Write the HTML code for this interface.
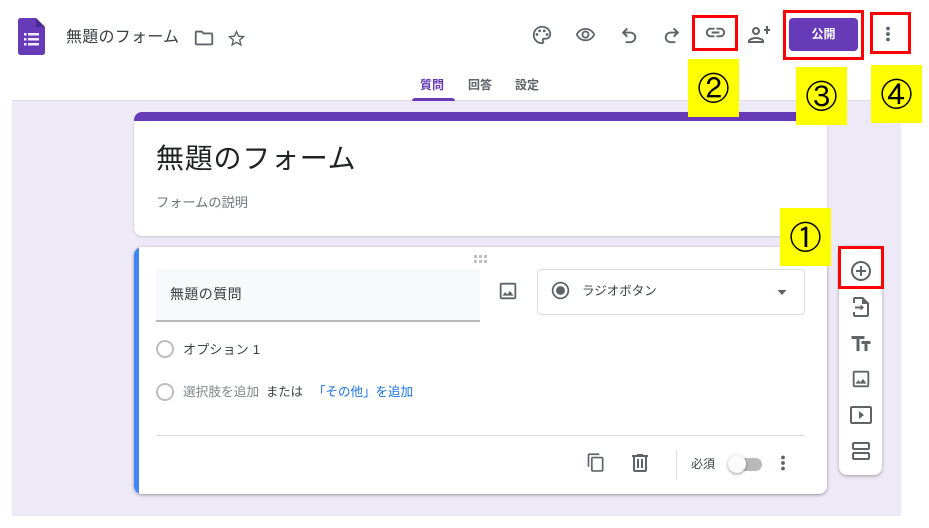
<!DOCTYPE html>
<html lang="ja"><head><meta charset="utf-8"><style>
html,body{margin:0;padding:0;background:#fff}
body{width:929px;height:528px;position:relative;overflow:hidden;font-family:"Liberation Sans","Noto Sans CJK JP",sans-serif;color:#202124}
.a{position:absolute}
.t{position:absolute;white-space:nowrap;line-height:1}
svg.i{position:absolute;fill:#5f6368}
.y{position:absolute;background:#ff0;width:51px;height:58px;font-family:"IPAGothic","Noto Sans CJK JP",sans-serif;font-size:32px;line-height:58px;text-align:center;color:#000}
.r{position:absolute;border:3px solid #f00;box-sizing:border-box}
.radio{position:absolute;width:18px;height:18px;border:2px solid #bdbdbd;border-radius:50%;box-sizing:border-box}
</style></head><body>
<div class="a" style="left:12px;top:100px;width:889px;height:416px;background:#ede9f7;border-top:1px solid #dfdce8;box-sizing:border-box"></div>

<svg class="a" style="left:18px;top:18px" width="28" height="37" viewBox="0 0 28 37"><path d="M2.500 0H18l9 9v25.500a2.500 2.500 0 0 1-2.500 2.500h-22A2.500 2.500 0 0 1 0 34.500v-32A2.500 2.500 0 0 1 2.500 0z" fill="#673ab7"/><path d="M18 0l9 9h-9z" fill="#4a2a8c"/><g fill="#f1ebfa"><rect x="6" y="15" width="2.500" height="2.500"/><rect x="10" y="15" width="11" height="2.500"/><rect x="6" y="20" width="2.500" height="2.500"/><rect x="10" y="20" width="11" height="2.500"/><rect x="6" y="25" width="2.500" height="2.500"/><rect x="10" y="25" width="11" height="2.500"/></g></svg>
<div class="t" style="left:66px;top:30px;font-size:16px;color:#3c4043;letter-spacing:.25px">無題のフォーム</div>
<svg class="i" style="left:193px;top:27px" width="22" height="22" viewBox="0 0 24 24"><path d="M20 6h-8l-2-2H4c-1.100 0-2 .9-2 2v12c0 1.100.9 2 2 2h16c1.100 0 2-.9 2-2V8c0-1.100-.9-2-2-2zm0 12H4V6h5.170l2 2H20v10z"/></svg>
<svg class="i" style="left:226px;top:28px" width="21" height="21" viewBox="0 0 24 24"><path d="M22 9.240l-7.190-.62L12 2 9.190 8.630 2 9.240l5.460 4.730L5.820 21 12 17.270 18.180 21l-1.630-7.030L22 9.240zM12 15.400l-3.760 2.270 1-4.280-3.320-2.880 4.380-.38L12 6.100l1.710 4.040 4.380.38-3.320 2.880 1 4.280L12 15.400z"/></svg>

<svg class="i" style="left:531px;top:24px" width="22" height="22" viewBox="0 0 24 24"><path d="M12 2C6.490 2 2 6.490 2 12s4.490 10 10 10c1.380 0 2.500-1.120 2.500-2.500 0-.61-.23-1.200-.64-1.670-.08-.1-.13-.21-.13-.33 0-.28.22-.5.500-.5H16c3.310 0 6-2.690 6-6 0-4.960-4.490-9-10-9zm4 13h-1.770c-1.380 0-2.500 1.120-2.500 2.500 0 .61.220 1.190.63 1.650.1.120.14.220.14.350 0 .28-.22.500-.5.500-4.410 0-8-3.590-8-8s3.590-8 8-8 8 3.140 8 7c0 2.210-1.790 4-4 4z"/><circle cx="6.500" cy="11.500" r="1.500"/><circle cx="9.500" cy="7.500" r="1.500"/><circle cx="14.500" cy="7.500" r="1.500"/><circle cx="17.500" cy="11.500" r="1.500"/></svg>
<svg class="i" style="left:575px;top:23px" width="21" height="24" viewBox="0 0 24 24"><path d="M12 6c3.790 0 7.170 2.130 8.820 5.500C19.170 14.870 15.790 17 12 17s-7.170-2.130-8.820-5.500C4.830 8.130 8.210 6 12 6m0-2C7 4 2.730 7.110 1 11.500 2.730 15.890 7 19 12 19s9.270-3.110 11-7.500C21.270 7.110 17 4 12 4zm0 5c1.380 0 2.500 1.120 2.500 2.500S13.380 14 12 14s-2.500-1.120-2.500-2.500S10.620 9 12 9m0-2c-2.480 0-4.500 2.020-4.500 4.500S9.520 16 12 16s4.500-2.020 4.500-4.500S14.480 7 12 7z"/></svg>
<svg class="i" style="left:618px;top:23px" width="23" height="23" viewBox="0 0 24 24"><path d="M13 9H7.830l2.590-2.590L9 5 4 10l5 5 1.410-1.410L7.830 11H13c2.210 0 4 1.790 4 4s-1.790 4-4 4H8v2h5c3.310 0 6-2.690 6-6s-2.690-6-6-6z"/></svg>
<svg class="i" style="left:660px;top:23px" width="23" height="23" viewBox="0 0 24 24"><path d="M11 9h5.170l-2.590-2.590L15 5l5 5-5 5-1.410-1.410L16.170 11H11c-2.210 0-4 1.790-4 4s1.790 4 4 4h5v2h-5c-3.310 0-6-2.690-6-6s2.690-6 6-6z"/></svg>
<svg class="i" style="left:704px;top:21px" width="23" height="23" viewBox="0 0 24 24"><path d="M17 7h-4v2h4c1.650 0 3 1.350 3 3s-1.350 3-3 3h-4v2h4c2.760 0 5-2.240 5-5s-2.240-5-5-5zm-6 8H7c-1.650 0-3-1.350-3-3s1.350-3 3-3h4V7H7c-2.760 0-5 2.240-5 5s2.240 5 5 5h4v-2zm-3-4h8v2H8z"/></svg>
<svg class="i" style="left:746px;top:24px" width="24" height="24" viewBox="0 0 24 24"><path d="M9 12c2.210 0 4-1.790 4-4s-1.790-4-4-4-4 1.790-4 4 1.790 4 4 4zm0-6c1.100 0 2 .9 2 2s-.9 2-2 2-2-.9-2-2 .9-2 2-2zm0 8c-2.670 0-8 1.340-8 4v2h16v-2c0-2.660-5.330-4-8-4zm-6 4c.22-.72 3.310-2 6-2 2.700 0 5.800 1.290 6 2H3zM19 11V8h-2V6h2V3h2v3h2v2h-2v3z" transform="translate(1 -1)"/></svg>

<div class="a" style="left:789px;top:18px;width:69px;height:33px;background:#673ab7;border-radius:4px;color:#fff;font-size:12px;font-weight:700;line-height:33px;text-align:center">公開</div>
<svg class="i" style="left:876px;top:22px" width="24" height="24" viewBox="0 0 24 24"><circle cx="12" cy="6.500" r="1.900"/><circle cx="12" cy="12" r="1.900"/><circle cx="12" cy="17.500" r="1.900"/></svg>

<div class="t" style="left:420px;top:79px;font-size:12px;font-weight:700;color:#673ab7">質問</div>
<div class="t" style="left:468px;top:79px;font-size:12px;font-weight:700;color:#5f6368">回答</div>
<div class="t" style="left:515px;top:79px;font-size:12px;font-weight:700;color:#5f6368">設定</div>
<div class="a" style="left:412px;top:98px;width:43px;height:3px;background:#673ab7;border-radius:3px 3px 0 0"></div>

<div class="a" style="left:134px;top:112px;width:693px;height:124px;background:#fff;border-radius:8px;box-shadow:0 1px 2px rgba(60,64,67,.2);overflow:hidden"><div style="height:9px;background:#673ab7"></div></div>
<div class="t" style="left:156px;top:145px;font-size:28px;color:#202124;letter-spacing:.75px">無題のフォーム</div>
<div class="t" style="left:156px;top:196px;font-size:13.200px;color:#70757a">フォームの説明</div>

<div class="a" style="left:134px;top:247px;width:693px;height:247px;background:#fff;border-radius:8px;box-shadow:0 1px 3px rgba(60,64,67,.5);overflow:hidden"><div style="width:5px;height:100%;background:#4285f4"></div></div>
<svg class="a" style="left:474px;top:255px" width="15" height="9" fill="#bdbdbd"><rect x="0" y="0" width="3" height="3"/><rect x="5" y="0" width="3" height="3"/><rect x="10" y="0" width="3" height="3"/><rect x="0" y="5" width="3" height="3"/><rect x="5" y="5" width="3" height="3"/><rect x="10" y="5" width="3" height="3"/></svg>
<div class="a" style="left:156px;top:269px;width:324px;height:53px;background:#f8f9fa;border-bottom:2px solid #b8b8b8;box-sizing:border-box"></div>
<div class="t" style="left:170px;top:287px;font-size:14px;color:#3c4043;letter-spacing:.4px">無題の質問</div>
<svg class="i" style="left:497px;top:280px" width="22" height="22" viewBox="0 0 24 24"><path d="M19 5v14H5V5h14m0-2H5c-1.100 0-2 .9-2 2v14c0 1.100.9 2 2 2h14c1.100 0 2-.9 2-2V5c0-1.100-.9-2-2-2zm-4.860 8.860l-3 3.870L9 13.140 6 17h12l-3.860-5.140z"/></svg>

<div class="a" style="left:537px;top:269px;width:268px;height:46px;border:1px solid #dadce0;border-radius:4px;box-sizing:border-box;background:#fff"></div>
<svg class="i" style="left:549.500px;top:280px" width="21" height="21" viewBox="0 0 24 24"><path d="M12 7c-2.760 0-5 2.240-5 5s2.240 5 5 5 5-2.240 5-5-2.240-5-5-5zm0-5C6.480 2 2 6.480 2 12s4.480 10 10 10 10-4.480 10-10S17.520 2 12 2zm0 18c-4.420 0-8-3.580-8-8s3.580-8 8-8 8 3.580 8 8-3.580 8-8 8z"/></svg>
<div class="t" style="left:582px;top:285px;font-size:12.500px;color:#3c4043">ラジオボタン</div>
<svg class="i" style="left:776px;top:290px" width="12" height="6" viewBox="0 0 12 6"><path d="M1.500 0h9L6 5z"/></svg>

<div class="radio" style="left:156px;top:340px"></div>
<div class="t" style="left:183px;top:343px;font-size:13px;color:#3c4043;letter-spacing:.2px">オプション 1</div>
<div class="radio" style="left:156px;top:383px"></div>
<div class="t" style="left:183px;top:386px;font-size:12.700px;color:#80868b">選択肢を追加</div>
<div class="t" style="left:266px;top:386px;font-size:12.300px;color:#3c4043">または</div>
<div class="t" style="left:313px;top:386px;font-size:12.500px;color:#1a73e8">「その他」を追加</div>

<div class="a" style="left:156px;top:435px;width:649px;height:1px;background:#dadce0"></div>
<svg class="i" style="left:586px;top:453px" width="20" height="20" viewBox="0 0 24 24"><path d="M16 1H4c-1.100 0-2 .9-2 2v14h2V3h12V1zm3 4H8c-1.100 0-2 .9-2 2v14c0 1.100.9 2 2 2h11c1.100 0 2-.9 2-2V7c0-1.100-.9-2-2-2zm0 16H8V7h11v14z" transform="translate(0 -.5)"/></svg>
<svg class="i" style="left:628px;top:451px" width="24" height="24" viewBox="0 0 24 24"><path d="M15 4V3H9v1H4v2h1v13c0 1.100.9 2 2 2h10c1.100 0 2-.9 2-2V6h1V4h-5zm2 15H7V6h10v13zM9 8h2v9H9zm4 0h2v9h-2z"/></svg>
<div class="a" style="left:676px;top:450px;width:1px;height:29px;background:#e0e0e0"></div>
<div class="t" style="left:691px;top:458px;font-size:12px;color:#3c4043">必須</div>
<div class="a" style="left:732px;top:458px;width:30px;height:13px;border-radius:7px;background:#b9b9b9"></div>
<div class="a" style="left:728px;top:455px;width:18px;height:18px;border-radius:50%;background:#fafafa;box-shadow:0 1px 3px rgba(0,0,0,.4)"></div>
<svg class="i" style="left:771px;top:451px" width="24" height="24" viewBox="0 0 24 24"><circle cx="12" cy="6.500" r="1.900"/><circle cx="12" cy="12" r="1.900"/><circle cx="12" cy="17.500" r="1.900"/></svg>

<div class="a" style="left:839px;top:246px;width:43px;height:229px;background:#fff;border-radius:8px;box-shadow:0 1px 3px rgba(60,64,67,.45)"></div>
<svg class="i" style="left:849px;top:259px" width="24" height="24" viewBox="0 0 24 24"><path d="M13 7h-2v4H7v2h4v4h2v-4h4v-2h-4V7zm-1-5C6.480 2 2 6.480 2 12s4.480 10 10 10 10-4.480 10-10S17.520 2 12 2zm0 18c-4.410 0-8-3.590-8-8s3.590-8 8-8 8 3.590 8 8-3.590 8-8 8z"/></svg>
<svg class="i" style="left:849px;top:295px" width="24" height="24" viewBox="0 0 24 24"><path d="M14 2H6c-1.100 0-2 .9-2 2v4h2V4h7v5h5v11H6v-3H4v3c0 1.100.9 2 2 2h12c1.100 0 2-.9 2-2V8l-6-6zM6 11.500h5.500v-2l3.500 3-3.500 3v-2H6z"/></svg>
<svg class="i" style="left:849px;top:332px" width="24" height="24" viewBox="0 0 24 24"><path d="M2.500 4v3h5v12h3V7h5V4h-13zm19 5h-9v3h3v7h3v-7h3V9z"/></svg>
<svg class="i" style="left:850px;top:368px" width="22" height="22" viewBox="0 0 24 24"><path d="M19 5v14H5V5h14m0-2H5c-1.100 0-2 .9-2 2v14c0 1.100.9 2 2 2h14c1.100 0 2-.9 2-2V5c0-1.100-.9-2-2-2zm-4.860 8.860l-3 3.870L9 13.140 6 17h12l-3.860-5.140z"/></svg>
<svg class="i" style="left:849px;top:403px" width="24" height="24" viewBox="0 0 24 24"><path d="M10 8v8l5-4-5-4zm11-5H3c-1.100 0-2 .9-2 2v14c0 1.100.9 2 2 2h18c1.100 0 2-.9 2-2V5c0-1.100-.9-2-2-2zm0 16H3V5h18v14z"/></svg>
<svg class="i" style="left:849px;top:439px" width="24" height="24" viewBox="0 0 24 24"><path d="M19 13H5c-1.100 0-2 .9-2 2v4c0 1.100.9 2 2 2h14c1.100 0 2-.9 2-2v-4c0-1.100-.9-2-2-2zm0 6H5v-4h14v4zM19 3H5c-1.100 0-2 .9-2 2v4c0 1.100.9 2 2 2h14c1.100 0 2-.9 2-2V5c0-1.100-.9-2-2-2zm0 6H5V5h14v4z"/></svg>

<div class="y" style="left:780px;top:208px">①</div>
<div class="y" style="left:688px;top:59px">②</div>
<div class="y" style="left:796px;top:67px">③</div>
<div class="y" style="left:871px;top:65px">④</div>
<div class="r" style="left:838px;top:246px;width:46px;height:43px"></div>
<div class="r" style="left:692px;top:15px;width:46px;height:36px"></div>
<div class="r" style="left:783px;top:10px;width:81px;height:50px"></div>
<div class="r" style="left:870px;top:12px;width:41px;height:42px"></div>
</body></html>
